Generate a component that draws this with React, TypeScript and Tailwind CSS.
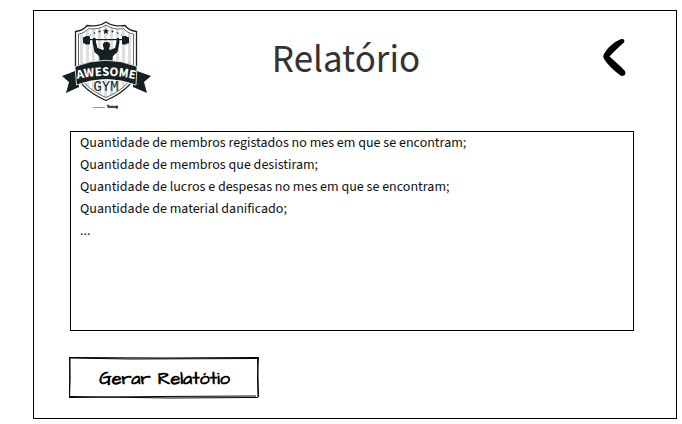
const reportItems = [
  'Quantidade de membros registados no mes em que se encontram;',
  'Quantidade de membros que desistiram;',
  'Quantidade de lucros e despesas no mes em que se encontram;',
  'Quantidade de material danificado;',
  '...',
];

const shield =
  'M46 2C41 6 32 6.500 27 5.500C24.500 9 21 11 15.500 11.500V48C16 62 27 72 46 80.500C65 72 76 62 76.500 48V11.500C71 11 67.500 9 65 5.500C60 6.500 51 6 46 2Z';
const innerShield =
  'M46 5C40 9 34 9.500 28.500 8.500C26 11.500 22.500 13.500 18.500 14V48C18.500 60 29 70 46 77.500C63 70 73.500 60 73.500 48V14C69.500 13.500 66 11.500 63.500 8.500C58 9.500 52 9 46 5Z';
const stripes = [20, 26, 32, 38, 44, 50, 56, 62, 68];

function GymLogo() {
  return (
    <svg viewBox="0 0 92 90" className="h-[90px] w-[92px]" role="img" aria-label="Awesome Gym">
      <defs>
        <clipPath id="shield-area">
          <path d={innerShield} />
        </clipPath>
        <path id="ribbon-line" d="M12 60.500Q46 51 80 60.500" />
      </defs>
      <path d={shield} fill="#fff" stroke="#1b2426" strokeWidth="1.300" />
      <g clipPath="url(#shield-area)" fill="#dedee1">
        {stripes.map((x) => (
          <path key={x} d={`M${x} 0h3v80h-3z`} />
        ))}
      </g>
      <path d={innerShield} fill="none" stroke="#3b4446" strokeWidth="0.800" />
      <g fill="#152023">
        <path d="M46 8l.9 2.300h2.400l-1.900 1.500.8 2.400L46 12.700l-2.200 1.500.8-2.400-1.900-1.500h2.400z" />
        <circle cx="39.500" cy="11.500" r="1" />
        <circle cx="52.500" cy="11.500" r="1" />
        <circle cx="34.500" cy="13" r="0.800" />
        <circle cx="57.500" cy="13" r="0.800" />
        <circle cx="30.500" cy="15" r="0.600" />
        <circle cx="61.500" cy="15" r="0.600" />
        <rect x="25" y="19" width="43" height="1.200" />
        <rect x="23" y="17" width="2.500" height="6.500" rx="0.800" />
        <rect x="25" y="16" width="5" height="8.500" rx="1" />
        <rect x="62" y="16" width="5" height="8.500" rx="1" />
        <rect x="66.500" y="17" width="2.500" height="6.500" rx="0.800" />
        <path d="M33 18h2.500l.5 4 1.500 6 5.500 2c1-.5 1-1.500.5-2.500-1.500-4 0-5.500 3-5.500s4.500 1.500 3 5.500c-.5 1-.5 2 .5 2.500l5-2 1.500-6 .5-4H59l.5 4-2 10-4.500 4-1 7H40l-1-7-4.500-4-2-10z" />
        <path d="M15 51L2 56l7 6-3 11 13-6V52z" />
        <path d="M77 51l14 5-7 6 3 11-14-6V52z" />
        <path d="M15 46.500Q46 34 77 46.500L76 65Q46 54 16.500 65Z" stroke="#fff" strokeWidth="0.800" />
      </g>
      <text
        className="font-['Source_Sans_Pro','Source_Sans_3','Noto_Sans_CJK_SC',sans-serif] text-[13px] font-bold"
        fill="#fff"
        textAnchor="middle"
      >
        <textPath href="#ribbon-line" startOffset="50%">
          AWESOME
        </textPath>
      </text>
      <text
        x="46"
        y="71"
        textAnchor="middle"
        fill="#202729"
        className="font-['Liberation_Mono',monospace] text-[14px]"
      >
        GYM
      </text>
      <text x="33" y="88" fill="#111" className="font-['Liberation_Sans',sans-serif] text-[2px] font-bold">
        Designed by
      </text>
      <text
        x="47"
        y="88"
        fill="#111"
        className="font-['Liberation_Serif',serif] text-[3px] font-bold"
        stroke="#111"
        strokeWidth="0.300"
      >
        Vecteezy
      </text>
    </svg>
  );
}

export default function App() {
  return (
    <div className="bg-white pt-[10px] pr-[5px] pb-[5px] pl-[33px] font-['Source_Sans_Pro','Source_Sans_3','Noto_Sans_CJK_SC',sans-serif]">
      <main className="border border-black px-9 pt-[9px] pb-[19px]">
        <header className="-ml-[10px] grid grid-cols-[92px_1fr_100px] items-start">
          <GymLogo />
          <h1 className="pt-[10px] text-center text-[39px] leading-[60px] text-[#333]">Relatório</h1>
          <button type="button" aria-label="Voltar" className="mt-[17px] mr-[13px] justify-self-end">
            <svg viewBox="0 0 24 40" className="h-10 w-6">
              <path
                d="M17 2.500C19.500 1 22.500 2.500 21 5.500C16 10 11 14 6.500 19.500C11 24 17 28 21.500 33.500C24 37 21 40 17.500 38.500C11 34 5 28 1 22C0 20 0 18.500 1 17C4.500 10.500 10.500 5.500 17 2.500Z"
                fill="#000"
              />
            </svg>
          </button>
        </header>
        <section className="mt-[21px] mr-[6px] min-h-[200px] border border-black pl-[9px]">
          <ul className="text-sm leading-[22px] text-[#111]">
            {reportItems.map((item) => (
              <li key={item}>{item}</li>
            ))}
          </ul>
        </section>
        <button
          type="button"
          className="relative mt-[25px] -ml-px flex h-[43px] w-[191px] items-center justify-center pt-[2px] font-['Architects_Daughter',Lato,sans-serif] text-lg font-bold text-black"
        >
          <svg
            viewBox="0 0 191 43"
            className="absolute inset-0 h-full w-full"
            fill="none"
            stroke="#000"
            aria-hidden="true"
          >
            <path d="M0 1.500L95 2L190 1.500M1 2L60 3L189 2.500" />
            <path d="M189.500 1L188.500 20L189 41M188.500 2L189.500 41" />
            <path d="M0 41.500L90 40.500L187 40M1 40.500L100 42L189 41.500" />
            <path d="M.5 1L1 22L.5 41M1 2L.5 41" />
          </svg>
          <span>Gerar Relatótio</span>
        </button>
      </main>
    </div>
  );
}
